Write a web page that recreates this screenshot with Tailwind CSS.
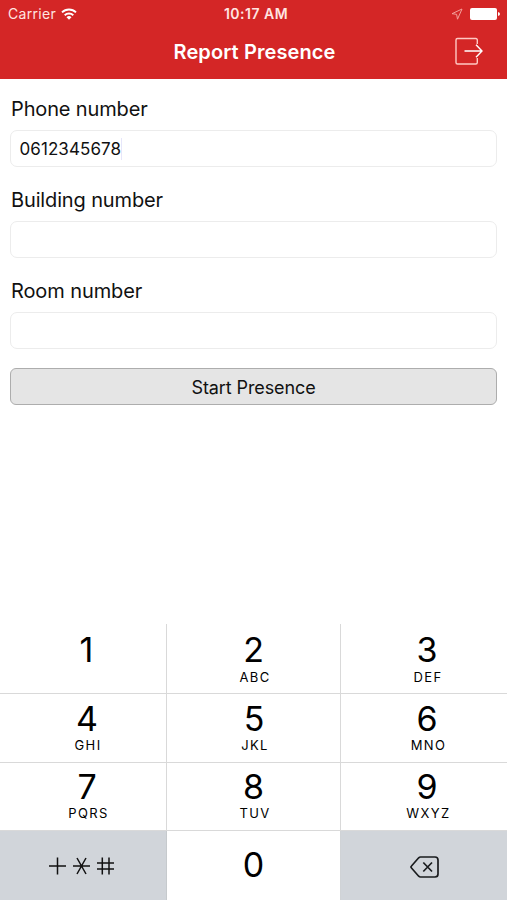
<!DOCTYPE html>
<html lang="en">
<head>
  <meta charset="UTF-8">
  <meta name="viewport" content="width=device-width, initial-scale=1.0">
  <title>Report Presence</title>
  <script src="https://cdn.jsdelivr.net/npm/@tailwindcss/browser@4"></script>
</head>
<body class="bg-white text-[#111] font-['Inter','Liberation_Sans',sans-serif]">
  <div class="flex flex-col w-[507px] h-[900px] overflow-hidden">
    <!-- Header -->
    <header class="h-[79px] shrink-0 bg-[#d42626] text-white">
      <div class="grid grid-cols-3 items-center h-[27px] pl-2 pr-[7px] text-[14px] text-[#ffe5e1]">
        <div class="flex items-center gap-[5px]">
          <span class="tracking-[0.3px]">Carrier</span>
          <svg class="w-4 h-3" viewBox="0 0 16 12" fill="none" stroke="#fff" stroke-width="1.9">
            <path d="M1 4.4a10 10 0 0 1 14 0M3.7 7.2a6.2 6.2 0 0 1 8.6 0"/>
            <path d="M5.5 9.2a3.6 3.6 0 0 1 5 0L8 11.8z" fill="#fff" stroke="none"/>
          </svg>
        </div>
        <span class="text-center font-semibold text-[14px] tracking-[0.5px] pl-[4px]">10:17 AM</span>
        <div class="flex items-center justify-end gap-[7px]">
          <svg class="w-3 h-3" viewBox="0 0 12 12" fill="none" stroke="#f3a09a" stroke-width="1">
            <path d="M11 1 1 5.7l4.6.6.9 4.9z"/>
          </svg>
          <svg class="w-[30px] h-3" viewBox="0 0 30 12" fill="#fff">
            <rect width="27" height="12" rx="2"/>
            <path d="M28 4q2 .5 2 2t-2 2z"/>
          </svg>
        </div>
      </div>
      <div class="grid grid-cols-[60px_1fr_60px] items-center h-[49px]">
        <span></span>
        <h1 class="text-center text-[20px] font-semibold tracking-[0.1px] pt-px pl-[2px]">Report Presence</h1>
        <svg class="w-[30px] h-[30px] ml-[7px]" viewBox="0 0 30 30" fill="none" stroke="#ffc9c4" stroke-width="1.4">
          <path d="M23.300 7V3q0-1.500-1.500-1.500H3.500Q2 1.500 2 3v22.500q0 1.500 1.500 1.500h18.300q1.500 0 1.500-1.500V21"/>
          <path d="M10.500 14H28M22 7.700l6 6.300-6 6.300" stroke="#fff"/>
        </svg>
      </div>
    </header>

    <!-- Form -->
    <main class="flex-1 px-[10px] pt-[15px]">
      <label class="block h-[36px] leading-[30px] text-[20px] tracking-[-0.14px] pl-px">Phone number</label>
      <div class="flex items-center h-[37px] mb-[18px] pl-[8.500px] border border-[#ececec] rounded-[7px] text-[17px]">
        <span class="pt-[2px] tracking-[0.08px]">0612345678</span>
        <span class="w-px h-[22px] bg-[#e6e6fa]"></span>
      </div>
      <label class="block h-[36px] leading-[30px] text-[20px] tracking-[-0.14px] pl-px">Building number</label>
      <div class="h-[37px] mb-[18px] border border-[#ececec] rounded-[7px]"></div>
      <label class="block h-[36px] leading-[30px] text-[20px] tracking-[-0.1px] pl-px">Room number</label>
      <div class="h-[37px] mb-[19px] border border-[#ececec] rounded-[7px]"></div>
      <button class="block w-full h-[37px] border border-[#adadad] bg-[#e5e5e5] rounded-[6px] text-[18px] tracking-[-0.1px] pt-px">Start Presence</button>
    </main>

    <!-- Keypad -->
    <section class="grid grid-cols-[167px_174px_166px] grid-rows-[70px_69px_68px_69px] h-[276px] shrink-0 text-black text-center text-[34px] leading-[41px]">
      <div class="border-r border-b border-[#d9d9d9] pt-[5px] pl-[7px]">1</div>
      <div class="border-r border-b border-[#d9d9d9] pt-[5px]">2<p class="text-[13px] leading-[14px] tracking-[1.4px] pl-[3px]">ABC</p></div>
      <div class="border-b border-[#d9d9d9] pt-[5px] pl-[6px]">3<p class="text-[13px] leading-[14px] tracking-[1.4px] pl-[2px]">DEF</p></div>

      <div class="border-r border-b border-[#d9d9d9] pt-[5px] pl-[8px] leading-[39px]">4<p class="text-[13px] leading-[14px] tracking-[1.4px] pl-[2px]">GHI</p></div>
      <div class="border-r border-b border-[#d9d9d9] pt-[5px] pl-px leading-[39px]">5<p class="text-[13px] leading-[14px] tracking-[1.4px] pl-[2px]">JKL</p></div>
      <div class="border-b border-[#d9d9d9] pt-[5px] pl-[6px] leading-[39px]">6<p class="text-[13px] leading-[14px] tracking-[1.4px] pl-[3px]">MNO</p></div>

      <div class="border-r border-b border-[#d9d9d9] pt-[5px] pl-[8px] leading-[38px]">7<p class="text-[13px] leading-[14px] tracking-[1.4px] pl-[3px]">PQRS</p></div>
      <div class="border-r border-b border-[#d9d9d9] pt-[5px] leading-[38px]">8<p class="text-[13px] leading-[14px] tracking-[1.4px] pl-[3px]">TUV</p></div>
      <div class="border-b border-[#d9d9d9] pt-[5px] pl-[6px] leading-[38px]">9<p class="text-[13px] leading-[14px] tracking-[1.4px] pl-[3px]">WXYZ</p></div>

      <div class="flex pl-[48px] pt-[25px] bg-[#d1d5da] border-r border-[#c6cacd]">
        <svg class="w-[68px] h-[20px]" viewBox="0 0 68 20" fill="none" stroke="#111" stroke-width="1.5">
          <path d="M1 10h17M9.500 1.500v17"/>
          <path d="M25 10h17M29 2l9 16M38 2l-9 16"/>
          <path d="M49 7h17M49 13h17M54.300 1.500v17M61 1.500v17"/>
        </svg>
      </div>
      <div class="border-r border-[#d0d3d6] pt-[13px]">0</div>
      <div class="flex pl-[69px] pt-[25px] bg-[#d1d5da]">
        <svg class="w-[30px] h-[22px]" viewBox="0 0 30 22" fill="none" stroke="#1a1c1e" stroke-width="1.7">
          <path d="M10.500 1H25q3 0 3 3v14q0 3-3 3H10.500q-1 0-1.800-.8L1.500 12q-1-1 0-2L8.700 1.800Q9.500 1 10.500 1z"/>
          <path d="m13.300 6.500 8.700 9M22 6.500l-8.700 9"/>
        </svg>
      </div>
    </section>
  </div>
</body>
</html>
